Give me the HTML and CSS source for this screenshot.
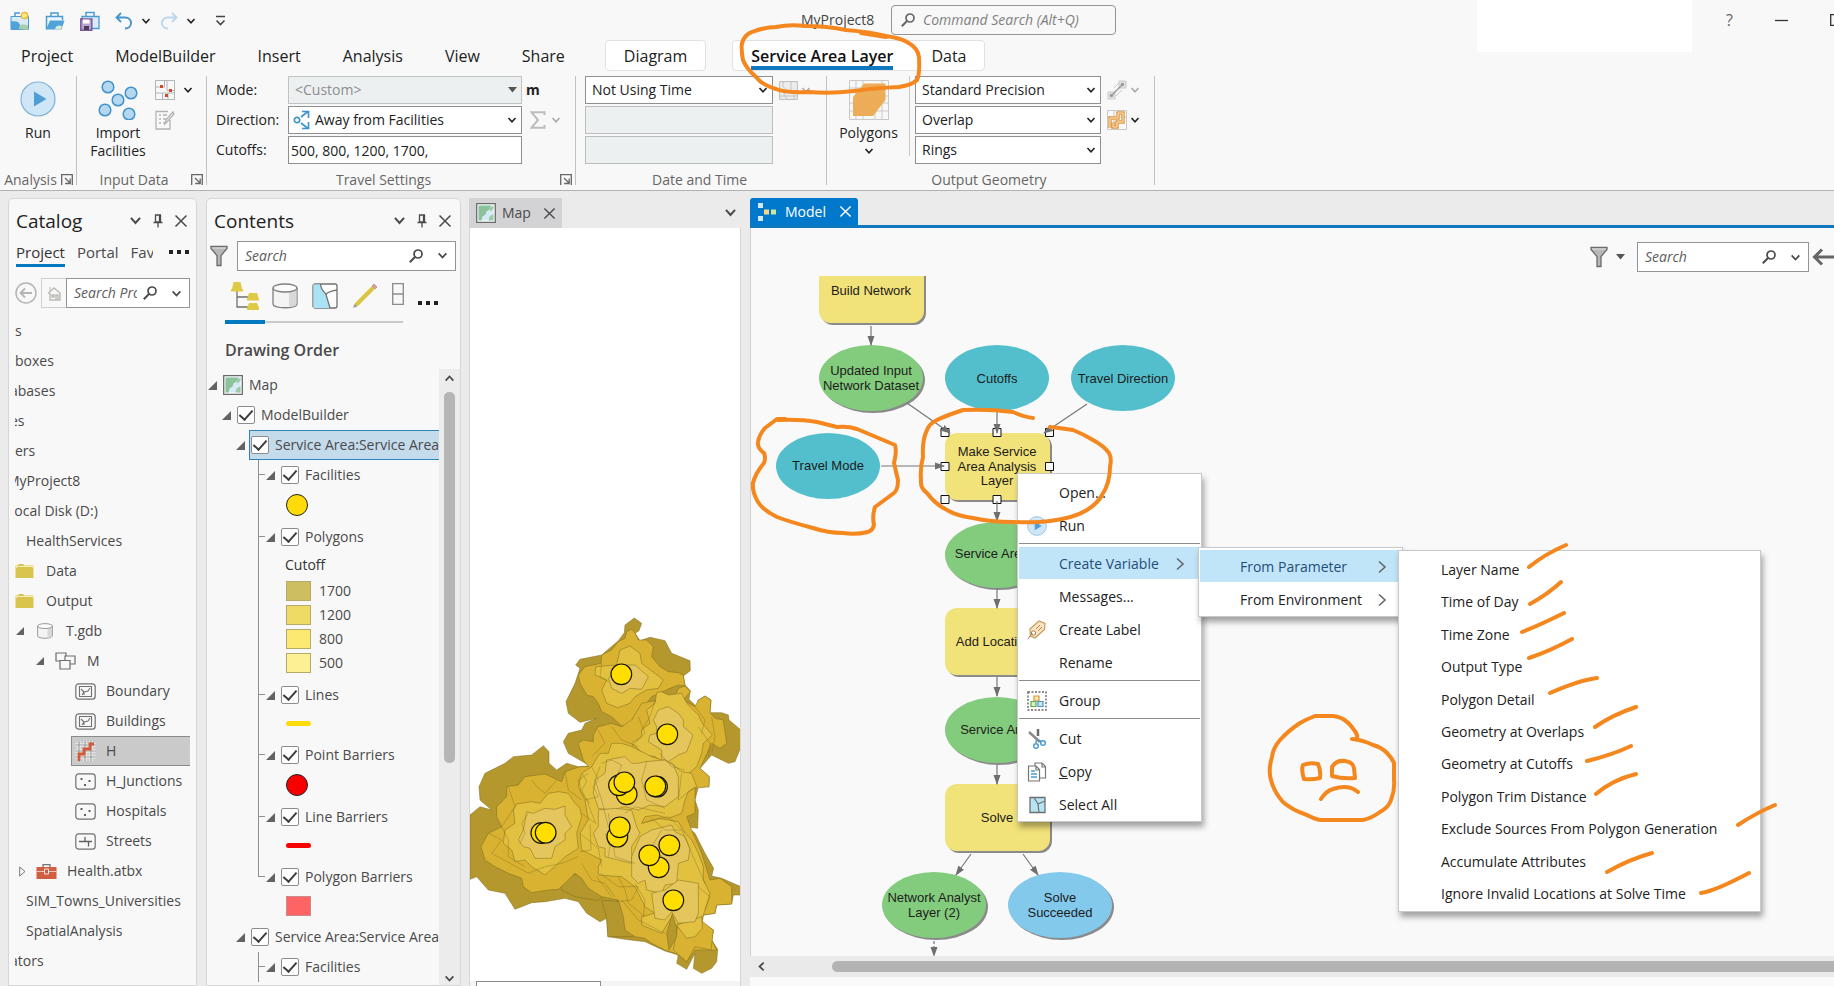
FILE: index.html
```html
<!DOCTYPE html>
<html lang="en">
<head>
<meta charset="utf-8">
<title>MyProject8</title>
<link rel="stylesheet" href="styles.css">
</head>
<body>
<svg class="defs" aria-hidden="true">
  <symbol id="chev" viewBox="0 0 10 10"><path d="M1.5 3 5 6.8 8.5 3" fill="none" stroke="currentColor" stroke-width="1.6"/></symbol>
  <symbol id="right" viewBox="0 0 10 14"><path d="M2 1.500 8 7 2 12.500" fill="none" stroke="currentColor" stroke-width="1.600"/></symbol>
  <symbol id="x" viewBox="0 0 14 14"><path d="M1.500 1.500 12.500 12.500M12.500 1.500 1.500 12.500" fill="none" stroke="currentColor" stroke-width="1.500"/></symbol>
  <symbol id="pin" viewBox="0 0 10 14"><path d="M2.500 1h5v7h-5zM.5 8.500h9M5 9v4.500M6.500 1v7" fill="none" stroke="currentColor" stroke-width="1.300"/></symbol>
  <symbol id="launch" viewBox="0 0 12 12"><path d="M.7 11V.7H11.300V11M4 4l5 5M9.200 4.500v5H4.200" fill="none" stroke="currentColor" stroke-width="1.300"/></symbol>
  <symbol id="mag" viewBox="0 0 14 14"><circle cx="9" cy="5" r="4" fill="none" stroke="currentColor" stroke-width="1.700"/><path d="M6 8 .8 13.200" stroke="currentColor" stroke-width="2"/></symbol>
  <symbol id="funnel" viewBox="0 0 18 22"><path d="M1 1.500h16v2l-6 7v10H7v-10l-6-7z" fill="#b8b8b8" stroke="#6b6b6b" stroke-width="1.300"/><path d="M2 3h14" stroke="#e4e4e4"/></symbol>
  <symbol id="open" viewBox="0 0 9 9"><path d="M9 0v9H0z" fill="#636363"/></symbol>
  <symbol id="play" viewBox="0 0 36 36"><circle cx="18" cy="18" r="17" fill="#cfe6f6" stroke="#7fb2d6" stroke-width="1.200"/><path d="M14 10.500 26.500 18 14 25.500z" fill="#4f9fd6"/></symbol>
  <symbol id="map" viewBox="0 0 20 20"><path d="M.7.7h18.600v18.600H.7z" fill="#fff" stroke="#6a6a6a" stroke-width="1.300"/><path d="M2.500 2.500h15v15h-15z" fill="#d4ebf5"/><path d="M2.500 2.500h13l-2 4-3 2-1 3-3 2-1 4h-3z" fill="#8cc39b"/><path d="M17.500 2.500v3l-3 3-1-3zM17.500 11v6.500h-5l1-4z" fill="#9ccaa6"/></symbol>
  <symbol id="folder" viewBox="0 0 19 16"><path d="M.5 15V2.500h2L4 1h4l1.500 1.500h9V15z" fill="#d9c54c"/><path d="M1.500 5V3.500h16.500V5" fill="none" stroke="#f4eebb"/></symbol>
  <symbol id="cyl" viewBox="0 0 26 26"><path d="M1 5v16c0 5 24 5 24 0V5" fill="#f4f4f4" stroke="#808080" stroke-width="1.300"/><path d="M17 9v15c5-.5 7.500-1.500 7.500-3V6z" fill="#d8d8d8"/><ellipse cx="13" cy="5" rx="12" ry="4" fill="#fbfbfb" stroke="#808080" stroke-width="1.300"/></symbol>
  <symbol id="poly" viewBox="0 0 21 17"><rect x=".8" y=".8" width="19.400" height="15.400" rx="3" fill="none" stroke="#707070" stroke-width="1.200"/><path d="M4.500 3.500h12v10h-12zM6 6l3 3v3M9 9l4-1 2-3M7 12l2-3" fill="none" stroke="#707070" stroke-width="1.100"/></symbol>
  <symbol id="pts" viewBox="0 0 21 17"><rect x=".8" y=".8" width="19.400" height="15.400" rx="3" fill="none" stroke="#707070" stroke-width="1.200"/><path d="M5.500 5h2v2h-2zM13.500 7h2v2h-2zM9 11h2v2H9z" fill="#606060"/></symbol>
  <symbol id="lin" viewBox="0 0 21 17"><rect x=".8" y=".8" width="19.400" height="15.400" rx="3" fill="none" stroke="#707070" stroke-width="1.200"/><path d="M4 8.500h13M10 8.500V4M13.500 8.500v5" fill="none" stroke="#606060" stroke-width="1.300"/></symbol>
</svg>

<header class="top">
  <div class="titlebar">
    <div class="quick">
      <button aria-label="New project"><svg width="20" height="20" viewBox="0 0 20 20"><path d="M1 5.500h17.500v13H1z" fill="#d9eaf6" stroke="#4b9bd1"/><path d="M1 10c5 1 7-1 9 4 1 3 0 4 1 5H1z" fill="#4fa3da"/><path d="M9 18c0-5 3-5 9-4v5z" fill="#a8cfaa"/><path d="M5 5V2h5" fill="none" stroke="#4b9bd1" stroke-width="1.500"/><circle cx="14.500" cy="4.500" r="3.200" fill="#ffe682" stroke="#e2b93b" stroke-width="1.300"/></svg></button>
      <button aria-label="Open project"><svg width="20" height="20" viewBox="0 0 20 20"><path d="M1.500 18.500V5.500h16V9" fill="#eef6fb" stroke="#4b9bd1" stroke-width="1.500"/><path d="M6 5V2h7v3" fill="none" stroke="#4b9bd1" stroke-width="1.500"/><path d="M1 18.500 5 9.500h14.500l-3 9z" fill="#4fa3da"/><path d="M10 18c1-4 4-4 7-3l-1 3.500z" fill="#d7ead0"/></svg></button>
      <button aria-label="Save project"><svg width="20" height="20" viewBox="0 0 20 20"><path d="M2 5.500h17v12H2z" fill="#d9eaf6" stroke="#4b9bd1" stroke-width="1.300"/><path d="M6 5V1.500h8V5" fill="none" stroke="#4b9bd1" stroke-width="1.500"/><path d="M.8 8h11v11.200H.8z" fill="#b9a4cd" stroke="#78599b" stroke-width="1.500"/><path d="M3 8.500h6.500v4H3z" fill="#fff"/><path d="M4 15h5v4H4z" fill="#4d3c60"/></svg></button>
      <button aria-label="Undo"><svg width="18" height="18" viewBox="0 0 18 18"><path d="M6 1 1.500 5.500 6 10M2 5.500h8c8 0 8 11 0 11" fill="none" stroke="#4796cf" stroke-width="1.900"/></svg></button>
      <button class="qc" aria-label="Undo list"><svg width="10" height="10"><use href="#chev"/></svg></button>
      <button aria-label="Redo"><svg width="18" height="18" viewBox="0 0 18 18"><path d="M12 1l4.500 4.500L12 10M16 5.500H8c-8 0-8 11 0 11" fill="none" stroke="#b9d8ec" stroke-width="1.900"/></svg></button>
      <button class="qc" aria-label="Redo list"><svg width="10" height="10"><use href="#chev"/></svg></button>
      <button class="qm" aria-label="Customize"><svg width="11" height="12" viewBox="0 0 11 12"><path d="M1 1.500h9M1.500 5.500l4 4 4-4" fill="none" stroke="#444" stroke-width="1.600"/></svg></button>
    </div>
    <span class="pname">MyProject8</span>
    <label class="cmd"><svg width="14" height="14"><use href="#mag"/></svg><input type="text" placeholder="Command Search (Alt+Q)" aria-label="Command Search"></label>
    <div class="win"><button aria-label="Help">?</button><button aria-label="Minimize"><svg width="13" height="13" viewBox="0 0 13 13"><path d="M0 6.500h13" stroke="#333" stroke-width="1.300"/></svg></button><button aria-label="Maximize"><svg width="12" height="12" viewBox="0 0 12 12"><path d="M.7.7h10.600v10.600H.7z" fill="none" stroke="#333" stroke-width="1.300"/></svg></button></div>
    <div class="blank"></div>
  </div>
  <nav class="tabs">
    <button>Project</button><button>ModelBuilder</button><button>Insert</button><button>Analysis</button><button>View</button><button>Share</button>
    <div class="ctx ctx1"><button>Diagram</button></div>
    <div class="ctx ctx2"><button class="on">Service Area Layer</button><button>Data</button></div>
  </nav>
  <div class="ribbon">
    <section class="grp g1">
      <div class="gb"><button class="big"><svg width="36" height="36"><use href="#play"/></svg><span>Run</span></button></div>
      <div class="cap"><span>Analysis</span><svg width="12" height="12"><use href="#launch"/></svg></div>
    </section>
    <section class="grp g2">
      <div class="gb">
        <button class="big"><svg width="40" height="40" viewBox="0 0 40 40"><g fill="#b4d8ef" stroke="#4393cb" stroke-width="1.500"><circle cx="10" cy="7" r="5.800"/><circle cx="33" cy="13" r="5.800"/><circle cx="20" cy="20" r="5.800"/><circle cx="7" cy="30" r="5.800"/><circle cx="31" cy="34" r="5.800"/></g></svg><span>Import<br>Facilities</span></button>
        <div class="side">
          <button aria-label="Create features"><svg width="20" height="20" viewBox="0 0 20 20"><path d="M.5.500h19v19H.5zM.5 7h9V.5M12 .5v10h7.500M.5 13h7v6.500M7.500 13h12M13 13v6.500" fill="none" stroke="#b5b5b5"/><path d="M5 5h3v3H5zM14 9h3v3h-3zM10 14h3v3h-3z" fill="#cf4a28"/></svg><svg width="10" height="10"><use href="#chev"/></svg></button>
          <button aria-label="Edit attributes" class="dim"><svg width="20" height="20" viewBox="0 0 20 20"><path d="M15 10v9H1V1.500h12M4 5h2M8 5h4M4 9h2M8 9h3M4 13h2M8 13h2M10 14l1-4 7-8 1 2-7 8z" fill="none" stroke="#b3b3b3" stroke-width="1.300"/></svg></button>
        </div>
      </div>
      <div class="cap"><span>Input Data</span><svg width="12" height="12"><use href="#launch"/></svg></div>
    </section>
    <section class="grp g3">
      <div class="form">
        <label for="mode">Mode:</label><div class="sel off"><select id="mode" disabled><option>&lt;Custom&gt;</option></select><svg width="9" height="6" viewBox="0 0 9 6"><path d="M0 0h9L4.500 5.500z" fill="#555"/></svg></div><b>m</b>
        <label for="dir">Direction:</label><div class="sel dir"><svg class="lead" width="18" height="20" viewBox="0 0 18 20"><g fill="none" stroke="#3f94cc" stroke-width="1.700"><circle cx="4" cy="10" r="2.700"/><path d="M8 7l7-5.500M9 1.500h6.500V8M8 13l7 5.500M9 18.500h6.500V12"/></g></svg><select id="dir"><option>Away from Facilities</option></select><svg width="10" height="10"><use href="#chev"/></svg></div><button class="dim sum" aria-label="Accumulate"><svg width="16" height="18" viewBox="0 0 16 18"><path d="M14.500 4V1.200H1.500L8 9l-6.500 7.800h13V14" fill="none" stroke="#bdbdbd" stroke-width="2"/></svg><svg width="10" height="10"><use href="#chev"/></svg></button>
        <label for="cut">Cutoffs:</label><input id="cut" type="text" value="500, 800, 1200, 1700,">
      </div>
      <div class="cap"><span>Travel Settings</span><svg width="12" height="12"><use href="#launch"/></svg></div>
    </section>
    <section class="grp g4">
      <div class="gb">
        <div class="col">
          <div class="sel"><select aria-label="Time"><option>Not Using Time</option></select><svg width="10" height="10"><use href="#chev"/></svg></div>
          <input type="text" disabled aria-label="Date"><input type="text" disabled aria-label="Time of day">
        </div>
        <div class="side"><button class="dim" aria-label="Time zone"><svg width="19" height="19" viewBox="0 0 19 19"><path d="M.6.6h17.800v17.800H.6z" fill="#ececec" stroke="#bcbcbc"/><path d="M4 .6v5l3 3-2 5 3 5M12 .6v8l3 3v7M.6 15h18" fill="none" stroke="#c4c4c4"/></svg><svg width="10" height="10"><use href="#chev"/></svg></button></div>
      </div>
      <div class="cap"><span>Date and Time</span></div>
    </section>
    <section class="grp g5">
      <div class="gb">
        <button class="big"><svg width="40" height="40" viewBox="0 0 40 40"><path d="M.5.500h39v39H.5zM7 .5v39M14 .5v39M33 .5v39M.5 8h39M.5 31h39M26 30v10M33 16h7M.5 23h39" fill="none" stroke="#c9c9c9"/><path d="M4 17 15 3.500h21.500V20L24 36H4z" fill="#edac58"/></svg><span>Polygons</span><svg width="10" height="10"><use href="#chev"/></svg></button>
        <div class="col">
          <div class="sel"><select aria-label="Precision"><option>Standard Precision</option></select><svg width="10" height="10"><use href="#chev"/></svg></div>
          <div class="sel"><select aria-label="Overlap"><option>Overlap</option></select><svg width="10" height="10"><use href="#chev"/></svg></div>
          <div class="sel"><select aria-label="Rings"><option>Rings</option></select><svg width="10" height="10"><use href="#chev"/></svg></div>
        </div>
        <div class="side">
          <button class="dim" aria-label="Lines"><svg width="20" height="20" viewBox="0 0 20 20"><path d="M1 12h7v7H1zM12 1h7v7h-7zM7 8l5-5M9 16l6-6" fill="#e4e4e4" stroke="#cacaca"/><path d="M4.500 15.500 15.500 4.500" stroke="#9b9b9b" stroke-width="1.500"/><circle cx="4.500" cy="15.500" r="1.800" fill="#9b9b9b"/><circle cx="15.500" cy="4.500" r="1.800" fill="#9b9b9b"/></svg><svg width="10" height="10"><use href="#chev"/></svg></button>
          <button aria-label="Overlapping lines"><svg width="20" height="20" viewBox="0 0 20 20"><path d="M.5.500h19v19H.5zM7 .5v19M.5 7h19" fill="none" stroke="#c9c9c9"/><path d="M3 18V8h8V3h5v9h-6v5H6v-5" fill="none" stroke="#e29a45" stroke-width="3.500"/><path d="M3 18V8h8V3h5v9h-6v5H6v-5" fill="none" stroke="#fbe6c8"/></svg><svg width="10" height="10"><use href="#chev"/></svg></button>
        </div>
      </div>
      <div class="cap"><span>Output Geometry</span></div>
    </section>
  </div>
</header>

<main class="work">
  <aside class="panel catalog">
    <div class="ph"><h2>Catalog</h2><button aria-label="Menu"><svg width="13" height="13"><use href="#chev"/></svg></button><button aria-label="Pin"><svg width="10" height="14"><use href="#pin"/></svg></button><button aria-label="Close"><svg width="14" height="14"><use href="#x"/></svg></button></div>
    <div class="ctabs"><button class="on">Project</button><button>Portal</button><button class="fav">Fav</button><button class="dots" aria-label="More"><i></i><i></i><i></i></button></div>
    <div class="csearch">
      <button aria-label="Back"><svg width="22" height="22" viewBox="0 0 22 22"><circle cx="11" cy="11" r="10" fill="none" stroke="#b4b4b4" stroke-width="1.500"/><path d="M17 11H6M10 6.500 5.500 11l4.500 4.500" fill="none" stroke="#b4b4b4" stroke-width="1.800"/></svg></button>
      <button class="home" aria-label="Home"><svg width="15" height="15" viewBox="0 0 15 15"><path d="M1 7.500 7 2l6.500 5.500M3 7v7h10V7M5 9h2v2H5zM9 14V9h2v5" fill="none" stroke="#b9bab4" stroke-width="1.400"/><path d="M3 1v4" stroke="#b9bab4"/></svg></button>
      <div class="sbox"><input type="text" placeholder="Search Project" aria-label="Search Project"><svg width="14" height="14"><use href="#mag"/></svg><svg class="c" width="11" height="11"><use href="#chev"/></svg></div>
    </div>
    <ul class="ctree">
      <li>s</li><li>boxes</li><li class="cut">abases</li><li class="cut">es</li><li>ers</li><li class="cut wide">MyProject8</li><li class="cut wide">Local Disk (D:)</li>
      <li class="t1">HealthServices</li>
      <li class="f"><svg width="19" height="16"><use href="#folder"/></svg>Data</li>
      <li class="f"><svg width="19" height="16"><use href="#folder"/></svg>Output</li>
      <li class="d1"><svg width="8" height="8"><use href="#open"/></svg><svg class="ic" width="16" height="16"><use href="#cyl"/></svg>T.gdb</li>
      <li class="d2"><svg width="8" height="8"><use href="#open"/></svg><svg class="ic" width="21" height="18" viewBox="0 0 21 18"><g fill="#f8f8f8" stroke="#6d6d6d" stroke-width="1.200"><path d="M1 1h10v8H1z"/><path d="M10 4h10v8H10z"/><path d="M5 8.500h10v8.500H5z"/></g></svg>M</li>
      <li class="d3"><svg width="21" height="17"><use href="#poly"/></svg>Boundary</li>
      <li class="d3"><svg width="21" height="17"><use href="#poly"/></svg>Buildings</li>
      <li class="d3 hs"><svg width="21" height="21" viewBox="0 0 21 21"><path d="M4 0v21M10 0v21M16 0v21M0 4h21M0 10h21M0 16h21" stroke="#f4f4f4" stroke-width="3"/><path d="M4 0v21M10 0v21M16 0v21M0 4h21M0 10h21M0 16h21" stroke="#9a9a9a" stroke-width="1.200"/><path d="M4 20v-7h5V8h6V3h4" fill="none" stroke="#cf5b3a" stroke-width="2.800"/></svg>H</li>
      <li class="d3"><svg width="21" height="17"><use href="#pts"/></svg>H_Junctions</li>
      <li class="d3"><svg width="21" height="17"><use href="#pts"/></svg>Hospitals</li>
      <li class="d3"><svg width="21" height="17"><use href="#lin"/></svg>Streets</li>
      <li class="d4"><svg width="7" height="11" viewBox="0 0 7 11"><path d="M.7 1v9L6 5.500z" fill="none" stroke="#777"/></svg><svg width="21" height="15" viewBox="0 0 21 15"><path d="M.5 3h20v12H.5z" fill="#d05f41"/><path d="M7 3V.7h7V3" fill="none" stroke="#777" stroke-width="1.300"/><path d="M.5 7.500h20" stroke="#f1c3b6"/><path d="M8.500 5h4v5h-4z" fill="#d05f41" stroke="#fbe7e1"/></svg>Health.atbx</li>
      <li class="t1">SIM_Towns_Universities</li><li class="t1">SpatialAnalysis</li><li class="cut">ators</li>
    </ul>
  </aside>

  <aside class="panel contents">
    <div class="ph"><h2>Contents</h2><button aria-label="Menu"><svg width="13" height="13"><use href="#chev"/></svg></button><button aria-label="Pin"><svg width="10" height="14"><use href="#pin"/></svg></button><button aria-label="Close"><svg width="14" height="14"><use href="#x"/></svg></button></div>
    <div class="filter"><svg width="18" height="22"><use href="#funnel"/></svg><div class="sbox"><input type="text" placeholder="Search" aria-label="Search contents"><svg width="14" height="14"><use href="#mag"/></svg><svg class="c" width="11" height="11"><use href="#chev"/></svg></div></div>
    <div class="views">
      <button class="on" aria-label="Drawing order"><svg width="28" height="28" viewBox="0 0 28 28"><path d="M6 9v16h12M6 15h12" fill="none" stroke="#707070" stroke-width="1.300"/><path d="M2.500 0h7l1.500 7h1v2.500H0V7h1zM18 11h8l2 6v1.500H16V17zM18 21h8l2 5v2H16v-2z" fill="#dfca45"/></svg></button>
      <button aria-label="Data source"><svg width="26" height="26"><use href="#cyl"/></svg></button>
      <button aria-label="Selection"><svg width="26" height="26" viewBox="0 0 26 26"><rect x="1" y="1" width="24" height="24" rx="2" fill="#fdfdfd" stroke="#727272" stroke-width="1.300"/><path d="M1.500 1.500h7c0 5 3 7 5 10l4 13.500h-16z" fill="#a9e3f5"/><path d="M8.500 1c0 5 3 7 5.500 10.500L18 25M14 11.500C17 8 20 8 25 7" fill="none" stroke="#727272" stroke-width="1.300"/></svg></button>
      <button aria-label="Editing"><svg width="26" height="26" viewBox="0 0 26 26"><path d="m2 24 1-4L20 3l3 3L6 23z" fill="#dcc545"/><path d="m20 3 2-2 3 3-2 2z" fill="#e79a9a" stroke="#888" stroke-width=".6"/><path d="m1 25 1.500-4L5 23.500z" fill="#999"/></svg></button>
      <button aria-label="Snapping" class="sn"><svg width="12" height="22" viewBox="0 0 12 22"><path d="M.7.7h10.600v20.600H.7zM.7 11h10.600" fill="none" stroke="#8a8a8a" stroke-width="1.300"/></svg></button>
      <button class="dots" aria-label="More"><i></i><i></i><i></i></button>
    </div>
    <h3>Drawing Order</h3>
    <div class="scroller">
      <div class="ltree">
        <div class="r l0"><svg width="9" height="9"><use href="#open"/></svg><span class="mp"><svg width="20" height="20"><use href="#map"/></svg>Map</span></div>
        <div class="r l1"><svg width="9" height="9"><use href="#open"/></svg><label><input type="checkbox" checked>ModelBuilder</label></div>
        <div class="r l2 cur"><svg width="9" height="9"><use href="#open"/></svg><label><input type="checkbox" checked>Service Area:Service Area</label></div>
        <div class="kids">
          <div class="r l3"><svg width="9" height="9"><use href="#open"/></svg><label><input type="checkbox" checked>Facilities</label></div>
          <div class="sym tall"><i class="dot y"></i></div>
          <div class="r l3"><svg width="9" height="9"><use href="#open"/></svg><label><input type="checkbox" checked>Polygons</label></div>
          <div class="head">Cutoff</div>
          <div class="sw"><i class="s1"></i>1700</div><div class="sw"><i class="s2"></i>1200</div><div class="sw"><i class="s3"></i>800</div><div class="sw last"><i class="s4"></i>500</div>
          <div class="r l3"><svg width="9" height="9"><use href="#open"/></svg><label><input type="checkbox" checked>Lines</label></div>
          <div class="sym"><i class="bar y"></i></div>
          <div class="r l3"><svg width="9" height="9"><use href="#open"/></svg><label><input type="checkbox" checked>Point Barriers</label></div>
          <div class="sym tall"><i class="dot red"></i></div>
          <div class="r l3"><svg width="9" height="9"><use href="#open"/></svg><label><input type="checkbox" checked>Line Barriers</label></div>
          <div class="sym"><i class="bar red"></i></div>
          <div class="r l3"><svg width="9" height="9"><use href="#open"/></svg><label><input type="checkbox" checked>Polygon Barriers</label></div>
          <div class="sym"><i class="box"></i></div>
        </div>
        <div class="r l2"><svg width="9" height="9"><use href="#open"/></svg><label><input type="checkbox" checked>Service Area:Service Area</label></div>
        <div class="kids more"><div class="r l3"><svg width="9" height="9"><use href="#open"/></svg><label><input type="checkbox" checked>Facilities</label></div></div>
      </div>
      <div class="vbar"><svg class="up" width="11" height="11"><use href="#chev"/></svg><i></i><svg width="11" height="11"><use href="#chev"/></svg></div>
    </div>
  </aside>

  <section class="view mapview">
    <div class="vt"><div class="vtab"><svg width="20" height="20"><use href="#map"/></svg><span>Map</span><button aria-label="Close Map"><svg width="13" height="13"><use href="#x"/></svg></button></div><button class="more" aria-label="Views"><svg width="13" height="13"><use href="#chev"/></svg></button></div>
    <div class="mbody">
      <svg class="areas" viewBox="15 0 813 1143" preserveAspectRatio="xMinYMax slice">
        <g stroke="#7d6a1c" stroke-opacity=".6" stroke-width="2.500" stroke-linejoin="round">
          <g fill="#b5982d">
            <path d="M478 98 480 75 508 54 530 70 522 92 510 100 525 122 555 112 600 122 620 160 675 182 676 212 655 228 660 255 676 272 672 298 700 325 700 300 720 288 738 300 735 338 770 338 790 345 792 360 828 390V440L810 485 790 490 740 465 705 505 733 530 732 560 700 560 690 600 700 630 698 685 665 680 690 700 720 760 746 805 740 828 770 835 828 860V885L805 885 800 912 755 915 750 940 715 945 705 965 745 990 740 1020 758 1048 755 1085 740 1105 710 1120 685 1105 690 1060 665 1108 635 1090 640 1065 600 1053 540 1025 480 1018 430 1010 425 955 405 965 365 940 340 905 300 895 240 905 200 908 150 928 120 880 70 870 35 830 15 838V645L45 620 80 630 45 600 42 560 60 520 120 490 145 470 200 465 235 437 252 455 252 490 275 510 305 490 340 500 375 498 310 460 295 425 310 400 350 390 360 370 395 355 345 367 310 340 303 305 330 250 345 205 332 195 345 178 410 165 460 122z"/>
            <path d="M410 900 470 905 480 960 560 990 500 1010 428 1010 425 955zM285 835 350 820 420 880 400 902 330 890 290 870z"/>
          </g>
          <g fill="#d8b230">
            <path d="M410 165 440 150 460 125 480 115 485 95 500 88 510 98 520 120 545 120 565 140 560 170 585 200 610 215 640 218 655 225 660 258 640 255 615 265 560 290 530 330 505 352 500 375 470 378 440 350 410 335 400 310 385 290 365 285 345 250 340 225 360 200 408 190z"/>
            <path d="M340 430 355 420 385 425 385 405 400 380 440 370 470 380 500 360 530 310 580 300 630 290 640 265 660 258 676 275 655 300 690 320 700 300 720 288 738 300 735 338 750 355 775 360 785 430 765 445 740 430 705 505 733 530 732 560 690 565 690 640 665 650 680 690 710 760 735 840 765 835 800 860 800 912 755 915 750 940 715 945 712 970 745 990 740 1020 755 1050 690 1050 665 1085 630 1060 600 1050 560 1030 540 1015 510 1010 480 990 475 950 460 900 410 890 370 865 350 835 330 820 305 845 280 868 250 870 200 878 175 860 170 835 130 820 90 800 60 780 48 740 70 700 110 680 95 650 95 620 125 590 125 560 160 555 180 530 240 522 290 545 300 515 345 500 370 500 355 480z"/>
          </g>
          <g fill="#e2c141">
            <path d="M465 150 495 138 525 160 530 190 570 220 595 240 580 265 545 270 510 290 495 310 458 323 425 310 410 270 425 240 390 225 392 200 455 195z"/>
            <path d="M575 278 590 275 610 285 650 280 660 300 670 315 700 345 712 370 742 405 715 430 710 460 695 500 665 525 640 515 610 500 570 470 540 465 500 430 530 410 530 390 555 370 545 330 570 310z"/>
            <path d="M395 475 405 460 430 460 440 430 470 430 500 440 520 450 560 470 620 490 650 515 680 520 695 560 670 575 660 600 650 640 610 655 575 645 540 650 530 670 580 655 640 665 660 700 680 720 700 760 715 800 715 840 735 880 720 930 700 990 665 1015 640 990 620 950 590 1000 530 975 530 950 570 940 540 920 510 860 470 830 400 825 400 800 410 780 350 750 345 700 370 660 360 600 340 560 350 520 380 500z"/>
            <path d="M155 612 200 605 225 610 250 580 280 575 310 580 330 610 345 625 350 650 335 700 340 745 300 770 280 790 240 825 200 800 180 780 150 785 140 750 115 730 120 690 150 670 145 630z"/>
            <path d="M640 965 700 955 745 990 738 1050 690 1040 665 1085 625 1050z" fill="#d8b230"/>
            <path d="M635 975 710 950 712 985 690 1010 665 1015z"/>
            <path d="M622 940 635 985 635 1010 612 1050 605 1000z" fill="#b5982d"/>
          </g>
          <g fill="#e5c65c">
            <path d="M430 235 440 225 470 195 510 195 550 230 530 268 495 265 470 280 440 265z"/>
            <path d="M580 330 610 320 640 340 655 360 655 380 684 405 665 455 640 465 610 485 590 475 590 450 550 425 555 405 575 400 575 380 565 360z"/>
            <path d="M390 540 420 520 425 480 480 470 500 490 520 490 540 485 600 480 625 495 640 530 640 590 600 620 555 615 520 630 480 620 440 630 400 625 385 580z"/>
            <path d="M185 635 205 640 240 625 270 628 300 618 300 645 320 680 300 700 300 720 270 740 260 775 210 775 195 745 175 740 160 720 175 690z"/>
            <path d="M400 630 450 625 500 630 515 680 525 700 500 740 500 790 460 780 420 770 420 745 400 740 385 700 400 680z"/>
            <path d="M525 710 560 690 620 675 630 695 660 710 675 745 670 780 640 790 635 850 600 855 590 880 545 870 540 840 520 850 500 830 500 770z"/>
            <path d="M560 880 600 870 640 840 700 850 700 940 690 965 640 970 620 935 600 960 570 955z"/>
          </g>
          <g fill="none" stroke-opacity=".45">
            <path d="M352 520 365 545 350 570 365 600 392 670 350 640M380 500 400 540 385 560 400 590 360 600M375 672 378 750 345 755M405 500 390 540 410 600 430 680M300 515 310 570 350 600M130 560 150 620 110 680 130 720 130 770 180 800M200 540 215 560 240 580 275 540M70 700 110 720 80 760 190 820 240 800 290 790 340 770M350 790 380 840 420 850 450 890M460 830 480 870 490 910 540 950M560 655 600 690 650 690 680 760 720 850M510 850 540 900 535 950M400 390 420 430 380 470M440 380 470 420 520 440M520 350 540 400 500 440M700 380 735 430 730 470M690 320 720 360 710 400M650 520 640 600 690 560M590 690 560 740 600 780M430 640 450 770 510 790M480 640 510 620 600 640"/>
            <path d="M405 820 460 860 520 860 500 900 455 905M190 640 170 670 180 700 165 730M345 700 400 745 410 800M395 830 440 890M470 900 520 960 600 1000M740 350 750 410 740 460M700 860 735 890 720 930M410 190 405 230 430 245M530 670 610 650 650 690M370 520 340 540 350 580 375 610M410 490 440 480 470 495 455 530M545 485 530 540 545 600 600 625M420 700 435 740 430 770M585 460 620 500 660 510M570 300 555 350 530 390"/>
          </g>
        </g>
        <g fill="#ffde00" stroke="#15120a" stroke-width="3.500">
          <circle cx="469" cy="223" r="31"/><circle cx="607" cy="403" r="31"/><circle cx="485" cy="583" r="31"/><circle cx="462" cy="556" r="31"/><circle cx="478" cy="547" r="31"/><circle cx="576" cy="560" r="31"/><circle cx="571" cy="559" r="31"/><circle cx="229" cy="699" r="31"/><circle cx="242" cy="698" r="31"/><circle cx="457" cy="710" r="31"/><circle cx="464" cy="682" r="31"/><circle cx="613" cy="736" r="31"/><circle cx="581" cy="802" r="31"/><circle cx="553" cy="766" r="31"/><circle cx="625" cy="901" r="31"/>
        </g>
      </svg>
      <div class="mfoot"><i></i></div>
    </div>
  </section>

  <section class="view modelview">
    <div class="vt"><div class="vtab act"><svg width="20" height="20" viewBox="0 0 20 20"><path d="M3 3l6 7-6 6M9 10h7" fill="none" stroke="#0b62a0"/><path d="M1 1h5v5H1zM1 14h5v5H1z" fill="#cfe9fb"/><path d="M7 7.500h5v5H7z" fill="#f5d58a"/><path d="M14 7.500h5v5h-5z" fill="#c5e8a5"/></svg><span>Model</span><button aria-label="Close Model"><svg width="13" height="13"><use href="#x"/></svg></button></div></div>
    <div class="canvas">
      <div class="find"><svg width="18" height="22"><use href="#funnel"/></svg><svg width="9" height="6" viewBox="0 0 9 6"><path d="M0 0h9L4.500 5.500z" fill="#555"/></svg><div class="sbox"><input type="text" placeholder="Search" aria-label="Search model"><svg width="14" height="14"><use href="#mag"/></svg><svg class="c" width="11" height="11"><use href="#chev"/></svg></div><svg width="22" height="18" viewBox="0 0 22 18"><path d="M22 9H3M10 1.500 2.500 9l7.500 7.500" fill="none" stroke="#666" stroke-width="3"/></svg></div>
      <svg class="diagram" width="500" height="728" viewBox="750 228 500 728">
        <defs>
          <filter id="sh" x="-10%" y="-10%" width="125%" height="125%"><feDropShadow dx="2" dy="2" stdDeviation=".5" flood-color="#8a8a8a"/></filter>
          <marker id="ar" markerWidth="10" markerHeight="8" refX="9" refY="4" orient="auto" markerUnits="userSpaceOnUse"><path d="M0 .5 10 4 0 7.500z" fill="#6f6f6f"/></marker>
          <clipPath id="cp"><path d="M750 276h500v700H750z"/></clipPath>
        </defs>
        <g clip-path="url(#cp)">
          <g filter="url(#sh)">
            <rect x="819" y="256" width="105" height="67" rx="12" fill="#f2e27a"/>
            <rect x="945" y="433" width="105" height="67" rx="12" fill="#f2e27a"/>
            <rect x="945" y="608" width="105" height="67" rx="12" fill="#f2e27a"/>
            <rect x="945" y="784" width="105" height="67" rx="12" fill="#f2e27a"/>
            <g fill="#84cc7d"><ellipse cx="871" cy="378" rx="52" ry="33"/><ellipse cx="997" cy="555" rx="52" ry="33"/><ellipse cx="997" cy="730" rx="52" ry="33"/><ellipse cx="934" cy="905" rx="52" ry="33"/></g>
            <ellipse cx="1060" cy="905" rx="52" ry="33" fill="#83c9ec"/>
          </g>
          <g fill="#53bfcd"><ellipse cx="997" cy="378" rx="52" ry="33"/><ellipse cx="1123" cy="378" rx="52" ry="33"/><ellipse cx="828" cy="466" rx="52" ry="33"/></g>
          <path d="M941 428.500h8v8h-8zM993 428.500h8v8h-8zM1045.500 428.500h8v8h-8zM941 462.500h8v8h-8zM1045.500 462.500h8v8h-8zM941 495.500h8v8h-8zM993 495.500h8v8h-8z" fill="#f9f9f9" stroke="#111"/>
          <g fill="none" stroke="#777" stroke-width="1.200">
            <path d="M871 326v19" marker-end="url(#ar)"/><path d="M907 403l43 30" marker-end="url(#ar)"/><path d="M997 411v22" marker-end="url(#ar)"/><path d="M1087 404l-43 29" marker-end="url(#ar)"/><path d="M881 466h63" marker-end="url(#ar)"/><path d="M997 501v20" marker-end="url(#ar)"/><path d="M997 589v19" marker-end="url(#ar)"/><path d="M997 677v19" marker-end="url(#ar)"/><path d="M997 765v19" marker-end="url(#ar)"/><path d="M971 854l-15 21" marker-end="url(#ar)"/><path d="M1023 854l15 21" marker-end="url(#ar)"/>
            <path d="M934 941v15" stroke-dasharray="3 2" marker-end="url(#ar)"/>
          </g>
          <g class="nt">
            <text x="871" y="295">Build Network</text>
            <text x="871" y="375">Updated Input</text><text x="871" y="390">Network Dataset</text>
            <text x="997" y="383">Cutoffs</text><text x="1123" y="383">Travel Direction</text><text x="828" y="470">Travel Mode</text>
            <text x="997" y="456">Make Service</text><text x="997" y="471">Area Analysis</text><text x="997" y="485">Layer</text>
            <text x="997" y="558">Service Area 2</text><text x="997" y="646">Add Locations</text><text x="997" y="734">Service Area</text><text x="997" y="822">Solve</text>
            <text x="934" y="902">Network Analyst</text><text x="934" y="917">Layer (2)</text>
            <text x="1060" y="902">Solve</text><text x="1060" y="917">Succeeded</text>
          </g>
        </g>
      </svg>
    </div>
    <div class="hbar"><svg width="11" height="11"><use href="#chev"/></svg><i></i></div>
    <div class="below"></div>
  </section>
</main>

<div class="menu m1" role="menu">
  <button role="menuitem">Open...</button>
  <button role="menuitem"><svg width="20" height="20"><use href="#play"/></svg>Run</button>
  <hr>
  <button role="menuitem" class="hot">Create Variable<svg class="sub" width="10" height="14"><use href="#right"/></svg></button>
  <button role="menuitem">Messages...</button>
  <button role="menuitem"><svg width="20" height="20" viewBox="0 0 20 20"><path d="M3 9 12 1l6 2.500-.5 6L8 18 3.500 16z" fill="#fbe5c3" stroke="#c59a5c" stroke-width="1.200"/><circle cx="6.500" cy="13" r="2.200" fill="#fff" stroke="#a9814a"/><path d="M1 19c1-1 2-5 5-5M9 9l4-4M11 11l4-4" fill="none" stroke="#a9814a"/></svg>Create Label</button>
  <button role="menuitem">Rename</button>
  <hr>
  <button role="menuitem"><svg width="20" height="20" viewBox="0 0 20 20"><path d="M1 1h18v18H1z" fill="none" stroke="#666" stroke-width="1.400" stroke-dasharray="2 1.500"/><path d="M7 5h5v5H7z" fill="#fbe3b4" stroke="#d19a3c" stroke-width="1.200"/><path d="M4 10.500h5v5H4z" fill="#d6eecb" stroke="#5fa845" stroke-width="1.200"/><path d="M11 10.500h5v5h-5z" fill="#cbe5f8" stroke="#4596cf" stroke-width="1.200"/></svg>Group</button>
  <hr>
  <button role="menuitem"><svg width="20" height="20" viewBox="0 0 20 20"><path d="M2 3l11 10" fill="none" stroke="#8a8a8a" stroke-width="2.500"/><path d="M11 0v7" fill="none" stroke="#6b6b6b" stroke-width="2.500"/><path d="M12 11l2 1.500M9.500 10.500 9 14" stroke="#4a9bd3" stroke-width="1.500"/><circle cx="16" cy="14" r="2.300" fill="none" stroke="#4a9bd3" stroke-width="1.500"/><circle cx="9" cy="17" r="2.300" fill="none" stroke="#4a9bd3" stroke-width="1.500"/></svg>Cut</button>
  <button role="menuitem"><svg width="20" height="20" viewBox="0 0 20 20"><path d="M8 1h7l3.500 3.500V16H8zM15 1v4h3.500" fill="#fff" stroke="#777" stroke-width="1.200"/><path d="M1.500 4H9l3.500 3.500V19h-11zM9 4v4h3.500" fill="#fff" stroke="#777" stroke-width="1.200"/><path d="M4 9h4M4 12h6M4 15h6" stroke="#4a9bd3" stroke-width="1.300"/></svg><span><u>C</u>opy</span></button>
  <button role="menuitem"><svg width="20" height="20" viewBox="0 0 20 20"><path d="M3 2.500h15v15H3z" fill="#b7e4f5" stroke="#6f6f6f" stroke-width="1.300"/><path d="M7 2.500 11 9l1 8.500M11 9l7-3" fill="none" stroke="#6f6f6f" stroke-width="1.200"/></svg>Select All</button>
</div>
<div class="menu m2" role="menu">
  <button role="menuitem" class="hot">From Parameter<svg class="sub" width="10" height="14"><use href="#right"/></svg></button>
  <button role="menuitem">From Environment<svg class="sub" width="10" height="14"><use href="#right"/></svg></button>
</div>
<div class="menu m3" role="menu">
  <button role="menuitem">Layer Name</button><button role="menuitem">Time of Day</button><button role="menuitem">Time Zone</button><button role="menuitem">Output Type</button><button role="menuitem">Polygon Detail</button><button role="menuitem">Geometry at Overlaps</button><button role="menuitem">Geometry at Cutoffs</button><button role="menuitem">Polygon Trim Distance</button><button role="menuitem">Exclude Sources From Polygon Generation</button><button role="menuitem">Accumulate Attributes</button><button role="menuitem">Ignore Invalid Locations at Solve Time</button>
</div>

<svg class="ink" width="1834" height="986" viewBox="0 0 1834 986" aria-hidden="true">
  <path d="M919 57Q920 74 917 80 912 85 899 87 875 88 854 91 830 94 809 92 785 93 776 89 762 85 756 77 746 68 743 60 741 50 742 43 745 34 752 32 765 27 776 27 790 24 805 26 827 26 846 30 870 32 886 36 900 38 907 42 918 48 919 57M861 33l25 4"/>
  <path d="M778 420Q800 419 817 422L837 427Q848 426 857 429L895 445Q897 452 894 463 896 472 898 480 898 490 894 493L875 507Q872 516 874 525 873 530 868 532 855 535 843 533 828 533 813 528 790 522 777 517 763 510 758 502 752 492 753 483 755 474 764 463 766 458 764 453 757 448 758 442 759 435 765 428L777 419h8"/>
  <path d="M1033 418Q1024 417 1013 412 990 409 963 410 945 416 937 420 929 424 927 430 922 440 923 457 920 468 921 480 920 488 927 493 935 504 947 510 957 516 973 518 990 522 1013 522 1035 523 1050 521 1074 518 1087 510 1098 503 1102 495 1110 483 1110 467 1112 458 1109 453 1104 446 1093 440 1083 434 1073 430 1060 428 1050 427"/>
  <path d="M1357 739Q1358 734 1354 730 1350 724 1347 722 1342 717 1333 716H1315Q1307 719 1300 723 1288 731 1280 740 1273 748 1272 757 1268 770 1271 780 1274 792 1283 802 1292 810 1307 815 1316 820 1322 820H1363Q1372 818 1380 812 1389 807 1391 800 1395 790 1394 780V763Q1392 758 1387 753 1381 747 1373 745 1363 740 1352 739M1303 765Q1310 762 1318 764 1321 770 1320 778 1312 780 1304 779 1301 770 1303 765M1332 767Q1336 760 1345 761 1353 762 1354 768L1355 778Q1342 779 1332 776zM1321 799Q1326 791 1333 789 1348 784 1358 792"/>
  <path d="M1529 567Q1545 554 1566 545M1530 604Q1548 594 1561 582M1522 632Q1540 625 1564 613M1529 658Q1550 651 1572 639M1550 693Q1580 680 1597 678M1595 727Q1612 715 1636 707M1587 761Q1612 755 1631 746M1596 794Q1612 780 1636 774M1738 825Q1756 813 1775 805M1607 872Q1630 859 1652 853M1701 893Q1715 891 1749 873"/>
</svg>
</body>
</html>
```

FILE: styles.css
```css
* { box-sizing: border-box; }
body { margin: 0; height: 100vh; display: flex; flex-direction: column; overflow: hidden; background: #ebebeb; color: #4a4a4a; font: 14px/20px "Open Sans", "Noto Sans", sans-serif; }
button, input, select { font: inherit; color: inherit; }
button { border: 0; background: none; padding: 0; }
h2, h3, ul { margin: 0; padding: 0; }
ul { list-style: none; }
svg { flex: none; display: block; }
input::placeholder { color: #5c5c5c; opacity: 1; font-style: italic; }
.defs { position: absolute; width: 0; height: 0; }

.top { background: #f8f8f8; border-bottom: 1px solid #b2b2b2; color: #222; }
.titlebar { height: 40px; display: flex; align-items: center; position: relative; }
.quick { display: flex; align-items: center; gap: 15px; padding-left: 10px; width: 794px; }
.quick button { margin-top: 2px; }
.quick .qc { margin-left: -7px; margin-right: -6px; }
.quick .qm { margin-left: 10px; }
.pname { width: 97px; padding-left: 7px; color: #444; }
.cmd { width: 225px; height: 30px; border: 1px solid #949494; border-radius: 4px; display: flex; align-items: center; gap: 8px; padding-left: 9px; color: #666; }
.cmd input { border: 0; background: none; padding: 0; width: 180px; }
.cmd input::placeholder { color: #808080; }
.win { margin-left: auto; display: flex; align-items: center; gap: 42px; margin-right: -8px; font-size: 16px; color: #666; }
.blank { position: absolute; right: 142px; top: 0; width: 215px; height: 52px; background: #fff; }

.tabs { display: flex; align-items: center; height: 31px; padding-left: 21px; font-size: 16px; gap: 42px; }
.tabs .ctx { display: flex; align-items: center; height: 31px; background: #fff; border: 1px solid #e2e2e2; border-radius: 4px; gap: 38px; padding: 0 18px; }
.ctx1 { margin-left: -2px; }
.ctx2 { margin-left: -16px; }
.tabs .on { font-weight: 600; color: #111; align-self: stretch; border-bottom: 4px solid #1078be; padding-top: 4px; }

.ribbon { display: flex; padding: 5px 0; height: 119px; }
.grp { display: flex; flex-direction: column; justify-content: space-between; border-right: 1px solid #c2c2c2; }
.g1 { width: 77px; } .g2 { width: 130px; } .g3 { width: 369px; } .g4 { width: 251px; } .g5 { width: 328px; }
.gb { display: flex; }
.cap { display: flex; align-items: center; color: #666; line-height: 12px; height: 11px; padding-right: 3px; }
.cap span { flex: 1; text-align: center; }
.big { display: flex; flex-direction: column; align-items: center; line-height: 18px; padding-top: 4px; gap: 4px; }
.g1 .big { width: 76px; gap: 7px; padding-top: 5px; }
.g2 .big { width: 76px; margin-left: 3px; }
.big > svg + span { white-space: nowrap; }
.side { display: flex; flex-direction: column; gap: 10px; padding-top: 4px; }
.side button { display: flex; align-items: center; gap: 8px; height: 20px; }
.g2 .side { margin-left: -1px; }
.dim { color: #aaa; }
.form { display: grid; grid-template-columns: 70px 234px auto; column-gap: 2px; row-gap: 2px; align-items: center; justify-content: start; padding-left: 9px; }
.form b { padding-left: 2px; }
.sum { display: flex; align-items: center; gap: 5px; padding-left: 6px; }
.sel { position: relative; height: 28px; background: #fff; border: 1px solid #8f8f8f; display: flex; align-items: center; }
.sel select { appearance: none; border: 0; background: none; padding: 0 20px 0 6px; width: 100%; height: 26px; opacity: 1; }
.sel > svg:last-child { position: absolute; right: 4px; pointer-events: none; }
.sel.off { background: #edf0f1; border-color: #c2c2c2; color: #8d8d8d; }
.sel .lead { margin-left: 4px; }
.sel.dir select { padding-left: 4px; }
.form input, .col input { height: 28px; border: 1px solid #8f8f8f; padding: 0 2px; background: #fff; width: 100%; }
.col input:disabled { background: #edf0f1; border-color: #bcbcbc; }
.col { display: flex; flex-direction: column; gap: 2px; }
.g4 .col { width: 188px; margin-left: 9px; }
.g4 .side { margin-left: 6px; }
.g4 .side button { gap: 3px; }
.g5 .big { width: 82px; margin-left: 1px; border-right: 1px solid #c8c8c8; margin-bottom: 8px; }
.g5 .col { width: 186px; margin-left: 5px; }
.g5 .side { margin-left: 6px; }
.g5 .side button { gap: 3px; }

.work { flex: 1; min-height: 0; display: flex; padding-top: 7px; }
.panel { background: #f8f8f8; border: 1px solid #d6d6d6; border-radius: 5px 5px 0 0; display: flex; flex-direction: column; overflow: hidden; flex: none; }
.catalog { width: 189px; margin-left: 8px; }
.contents { width: 255px; margin-left: 9px; }
.ph { display: flex; align-items: center; height: 40px; padding: 3px 8px 0 7px; gap: 11px; }
.ph h2 { flex: 1; font: 400 19px/24px "Open Sans", sans-serif; color: #222; }
.ctabs { display: flex; gap: 12px; padding: 0 7px; height: 28px; align-items: stretch; font-size: 15px; }
.ctabs button { text-align: left; padding-bottom: 3px; }
.ctabs .on { border-bottom: 3px solid #0079c1; padding-bottom: 0; -webkit-text-stroke: 0; color: #333; }
.ctabs .fav { width: 22px; overflow: hidden; }
.dots { display: flex; gap: 4px; align-items: center; }
.dots i { width: 4px; height: 4px; background: #222; }
.ctabs .dots { margin-left: auto; }
.csearch { display: flex; align-items: center; padding: 11px 6px 0; }
.home { width: 25px; height: 30px; border: 1px solid #cfcfcf; margin-left: 4px; padding: 7px 5px; border-right: 0; }
.sbox { flex: 1; min-width: 0; height: 30px; border: 1px solid #949494; background: #fff; display: flex; align-items: center; gap: 6px; padding: 0 7px; }
.sbox input { flex: 1; min-width: 0; width: 0; border: 0; padding: 0; background: none; }
.sbox .c { margin-left: 8px; }
.ctree { padding: 8px 6px 0; }
.ctree li { display: flex; align-items: center; height: 30px; overflow: hidden; white-space: nowrap; }
.ctree .cut { text-indent: -5px; }
.ctree .wide { text-indent: -8px; }
.ctree .t1 { padding-left: 11px; }
.ctree .f { gap: 12px; }
.ctree .d1 { gap: 13px; padding-left: 1px; }
.ctree .d2 { gap: 11px; padding-left: 21px; }
.ctree .d3 { gap: 10px; padding-left: 4px; margin-left: 56px; }
.ctree .d4 { gap: 10px; padding-left: 4px; }
.ctree .hs { background: #cacaca; border: 1px solid #8a8a8a; border-right: 0; padding-left: 3px; }

.filter { display: flex; align-items: center; gap: 9px; padding: 1px 4px 0 3px; }
.contents .filter { height: 32px; }
.views { display: flex; margin: 11px 0 0 18px; height: 42px; gap: 14px; align-items: flex-start; width: 215px; background: linear-gradient(#c9c9c9, #c9c9c9) 0 39px / 178px 2px no-repeat; }
.views .on { padding: 0 6px; margin-right: -7px; height: 42px; border-bottom: 4px solid #0079c1; display: flex; align-items: flex-start; }
.views button { padding-top: 1px; }
.views .dots { padding-top: 19px; }
.contents h3 { font: 600 16px/22px "Open Sans", sans-serif; padding: 15px 0 0 18px; height: 45px; }
.scroller { display: flex; flex: 1; min-height: 0; }
.ltree { flex: 1; min-width: 0; padding-top: 1px; overflow: hidden; }
.r { display: flex; align-items: center; height: 30px; gap: 4px; white-space: nowrap; position: relative; }
.r label { display: flex; align-items: center; gap: 6px; padding-left: 2px; flex: 1; min-width: 0; height: 30px; }
.r .mp { display: flex; gap: 6px; padding-left: 2px; }
.l0 { padding-left: 1px; } .l1 { padding-left: 15px; } .l2 { padding-left: 29px; } .l3 { padding-left: 59px; }
.l3::before { content: ""; position: absolute; left: 51px; top: 14px; width: 7px; border-top: 1px solid #8f8f8f; }
.cur label { background: #c4dbec; border: 1px solid #2d84bd; border-right: 0; padding-left: 1px; overflow: hidden; }
.r input { appearance: none; margin: 0; width: 18px; height: 18px; border: 1px solid #8c8c8c; border-radius: 2px; background: #fff; flex: none; display: grid; place-items: center; }
.r input::after { content: ""; width: 6px; height: 11px; border: solid #3c3c3c; border-width: 0 2px 2px 0; transform: rotate(42deg); margin-top: -3px; }
.kids { position: relative; }
.kids::before { content: ""; position: absolute; left: 51px; top: 0; bottom: 45px; border-left: 1px solid #8f8f8f; }
.kids.more::before { bottom: 0; }
.sym { display: flex; align-items: center; height: 30px; padding: 3px 0 6px 79px; }
.sym.tall { height: 32px; padding: 0 0 2px 79px; }
.dot { width: 22px; height: 22px; border-radius: 50%; border: 1px solid #222; }
.y { background: #ffdb0a; } .red { background: #f80000; }
.bar { width: 25px; height: 5px; border-radius: 3px; }
.box { width: 25px; height: 20px; background: #ff6464; border: 1px solid #c98c8c; }
.head { padding: 3px 0 0 78px; height: 27px; color: #333; }
.sw { display: flex; align-items: center; gap: 8px; height: 24px; padding-left: 79px; }
.sw.last { margin-bottom: 5px; }
.sw i { width: 25px; height: 20px; border: 1px solid #b5aa6a; }
.s1 { background: #cdbf60; } .s2 { background: #eddb66; } .s3 { background: #fbe972; } .s4 { background: #fbf094; }
.vbar { width: 21px; background: #ececec; display: flex; flex-direction: column; align-items: center; padding: 4px 0 1px; gap: 8px; }
.vbar .up { transform: rotate(180deg); }
.vbar i { width: 11px; height: 371px; border-radius: 5px; background: #b5b5b5; margin-bottom: auto; }

.view { display: flex; flex-direction: column; }
.mapview { width: 272px; margin-left: 8px; flex: none; }
.vt { height: 30px; display: flex; justify-content: space-between; align-items: flex-start; }
.vtab { height: 30px; background: #d3d3d5; display: flex; align-items: center; padding: 0 6px 0 7px; gap: 6px; }
.vtab button { margin-left: 6px; }
.vt .more { padding: 8px 4px; }
.mbody { flex: 1; min-height: 0; background: #fff; border: 1px solid #d6d6d6; border-width: 0 1px; display: flex; flex-direction: column; justify-content: flex-end; }
.areas { width: 100%; height: 381px; }
.mfoot { height: 5px; background: #f4f4f4; padding-left: 6px; flex: none; }
.mfoot i { display: block; width: 125px; height: 5px; background: #fff; border: 1px solid #8c8c8c; border-bottom: 0; }
.modelview { flex: 1; min-width: 0; margin-left: 9px; }
.modelview .vt { border-bottom: 3px solid #0f77bd; align-items: flex-end; }
.vtab.act { height: 27px; background: #0079cc; color: #fff; border-radius: 3px 3px 0 0; gap: 8px; }
.vtab.act button { margin-left: 5px; }
.canvas { flex: 1; min-height: 0; background: #f9f9f9; border-left: 1px solid #d0d0d0; position: relative; overflow: hidden; }
.diagram { position: absolute; left: -1px; top: 0; }
.nt { font: 13px "Liberation Sans", Arial, sans-serif; fill: #1c1c1c; text-anchor: middle; }
.find { display: flex; justify-content: flex-end; align-items: center; gap: 8px; padding-top: 14px; }
.find .sbox { flex: none; width: 172px; margin: 0 -5px 0 4px; }
.hbar { height: 21px; background: #eaeaea; display: flex; align-items: center; padding-left: 6px; gap: 65px; }
.hbar svg { transform: rotate(90deg); }
.hbar i { flex: 1; height: 11px; background: #b3b3b3; border-radius: 6px 0 0 6px; }
.below { height: 9px; background: #fafafa; }

.menu { position: absolute; background: #fff; border: 1px solid #c9c9c9; box-shadow: 2px 5px 6px rgba(0, 0, 0, .35); display: flex; flex-direction: column; gap: 1px; padding: 2px 1px 1px; color: #222; }
.menu button { display: flex; align-items: center; min-height: 32px; text-align: left; padding: 1px 0 0 40px; white-space: nowrap; }
.menu button > svg:first-child:not(.sub) { margin: 0 12px 0 -32px; }
.menu .hot { background: #c1e5f8; color: #1f4e79; }
.menu .sub { margin-left: auto; color: #666; }
.menu hr { width: 100%; height: 1px; margin: 1px 0 2px; border: 0; background: #8c8c8c; }
.m1 { left: 1017px; top: 473px; width: 185px; }
.m1 .sub { margin-right: 15px; }
.m2 { left: 1198px; top: 547px; width: 205px; }
.m2 .sub { margin-right: 14px; }
.m3 { left: 1398px; top: 550px; width: 363px; min-height: 362px; display: grid; align-content: stretch; gap: 0; }
.m3 button { padding-left: 41px; }
.ink { position: absolute; left: 0; top: 0; pointer-events: none; fill: none; stroke: #f5871f; stroke-width: 4; stroke-linecap: round; stroke-linejoin: round; }
```
